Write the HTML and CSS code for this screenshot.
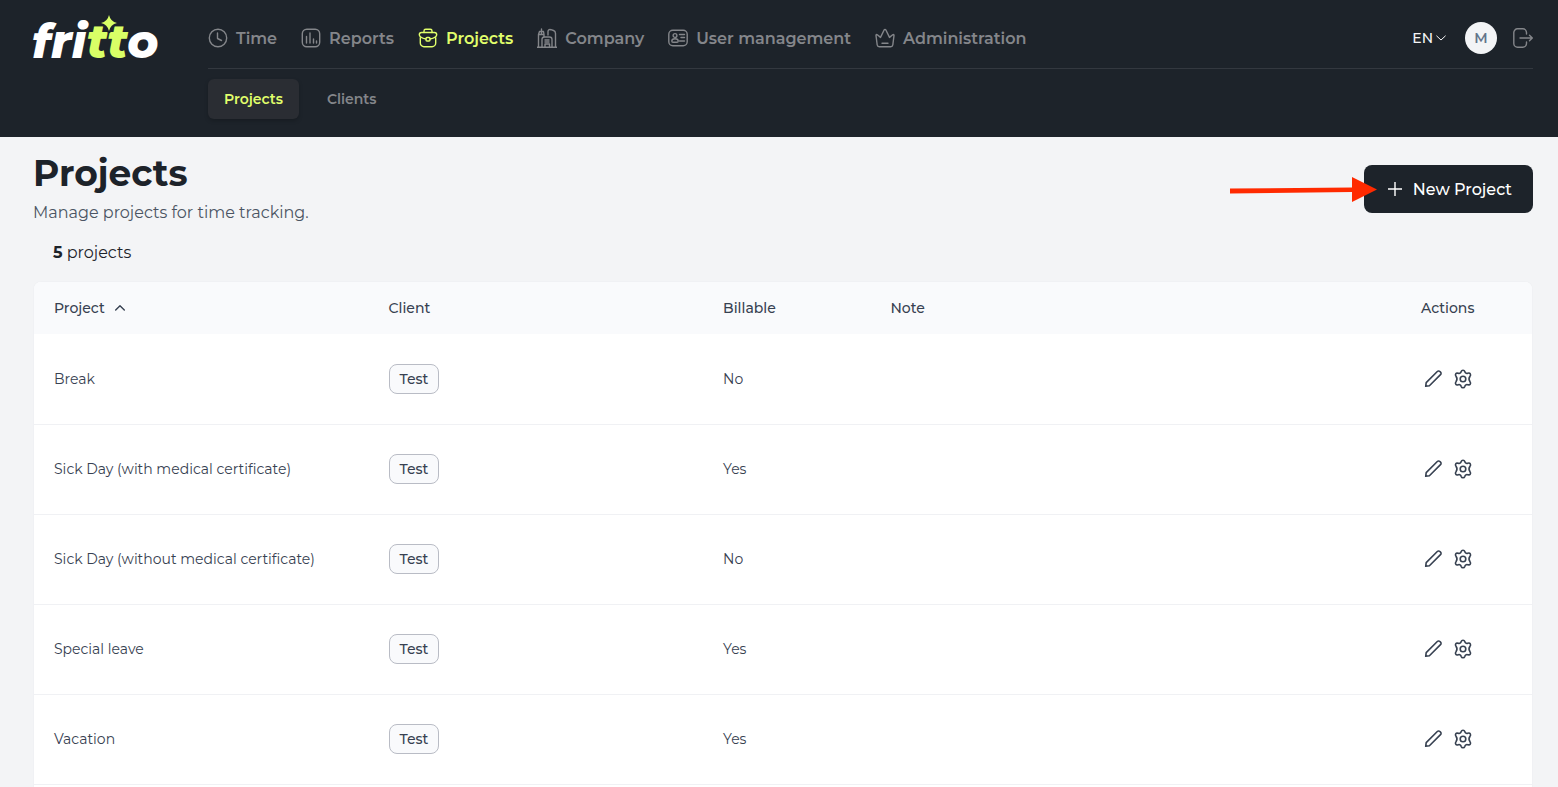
FILE: index.html
```html
<!DOCTYPE html>
<html lang="en">
<head>
<meta charset="utf-8" />
<meta name="viewport" content="width=device-width, initial-scale=1" />
<title>Projects</title>
<link rel="stylesheet" href="styles.css">
</head>
<body>
<svg class="sprite" aria-hidden="true">
  <symbol id="pencil" viewBox="0 0 20 20">
    <path d="M2.700 17.300l.5-3.700L14.300 2.500a1.800 1.800 0 0 1 2.600 0l.6.6a1.800 1.800 0 0 1 0 2.600L6.400 16.800z"/>
  </symbol>
  <symbol id="gear" viewBox="0 0 20 20">
    <circle cx="10" cy="10" r="2.800"/>
    <path d="M8.200 2.500Q8.600 1.200 10 1.200T11.800 2.500Q12.400 4.900 14.800 4.200Q16.600 3.700 17.300 4.900T17 7.300Q15 10 17 12.700Q18 14 17.300 15.100T14.800 15.800Q12.400 15.100 11.800 17.500Q11.400 18.800 10 18.800T8.200 17.500Q7.600 15.100 5.200 15.800Q3.400 16.300 2.700 15.100T3 12.700Q5 10 3 7.300Q2 6 2.700 4.900T5.200 4.200Q7.600 4.900 8.200 2.500z"/>
  </symbol>
</svg>

<header class="header">
  <a href="#" class="logo">fri<span>tt</span>o
    <svg class="star" viewBox="0 0 20 20"><path d="M10 2Q11.500 8.500 18 10Q11.500 11.500 10 18Q8.500 11.500 2 10Q8.500 8.500 10 2z"/></svg>
  </a>
  <div class="menu">
    <div class="menu-top">
      <nav class="nav">
        <a href="#"><svg viewBox="0 0 20 20"><circle cx="10" cy="10" r="8.700"/><path d="M9.500 5v5.500l4 2"/></svg>Time</a>
        <a href="#"><svg viewBox="0 0 20 20"><rect x="1.300" y="1.300" width="17.400" height="17.400" rx="4.500"/><path d="M5.500 8.500V15M9 5v10M12.500 11v4M15.500 13v2"/></svg>Reports</a>
        <a href="#" class="active"><svg viewBox="0 0 20 20"><path d="M6 4.500V3a1.700 1.700 0 0 1 1.700-1.700h4.600A1.700 1.700 0 0 1 14 3v1.500"/><path d="M8 11C3.300 10 1.300 8.900 1.300 6.700a2.200 2.200 0 0 1 2.200-2.200h13a2.200 2.200 0 0 1 2.200 2.200c0 2.200-2 3.300-6.700 4.300"/><rect x="8" y="9.500" width="4" height="3.500" rx="1"/><path d="M2.300 9.800V15a3.700 3.700 0 0 0 3.700 3.700h8a3.700 3.700 0 0 0 3.700-3.700V9.800"/></svg>Projects</a>
        <a href="#"><svg viewBox="0 0 20 20"><path d="M0 19.300h20M1.500 19V6.500h5.500V9M4.500 6.500V3.500M2.500 3.500h4M4.500 1v2.500M1.500 6.500l1-3M6.500 3.500L7 6.500M11 7V3.500q0-2.500 3-1.800l2.500.8q2 .7 2 3V19M5 19v-7.500q0-2.500 2.500-2.500h5q2.500 0 2.500 2.500V19M8 19v-3h4.500v3M8 12h4M8 14h4"/></svg>Company</a>
        <a href="#"><svg viewBox="0 0 20 20"><rect x=".8" y="2.300" width="18.400" height="15.400" rx="4"/><circle cx="7" cy="7.500" r="1.900"/><path d="M3.800 13q0-2.300 3.200-2.300t3.200 2.300q0 1.200-1.200 1.200H5q-1.200 0-1.200-1.200zM11.500 6.500h5M13 9.500h3.500M11.500 13h5"/></svg>User management</a>
        <a href="#"><svg viewBox="0 0 20 20"><path d="M2.200 17L1 7.500q0-1.500 1.300-.7l3.200 2.600L9 2.200q1-1.700 2 0l3.500 7.200 3.200-2.600q1.300-.8 1.300.7L17.800 17q-.3 1.700-2 1.700H4.200q-1.700 0-2-1.700zM7 15.300h6"/></svg>Administration</a>
      </nav>
      <div class="account">
        <button type="button" class="lang">EN<svg viewBox="0 0 10 10"><path d="M.7 3L5 7l4.300-4"/></svg></button>
        <button type="button" class="avatar">M</button>
        <button type="button" class="logout" aria-label="Log out"><svg viewBox="0 0 20 20"><path d="M13.500 6V4.500A3.700 3.700 0 0 0 9.800.8H4.500A3.700 3.700 0 0 0 .8 4.500v11a3.700 3.700 0 0 0 3.700 3.700h5.300a3.700 3.700 0 0 0 3.700-3.700V14M7 10h12.300M16.500 7.200l2.800 2.800-2.800 2.800"/></svg></button>
      </div>
    </div>
    <nav class="subnav">
      <a href="#" class="active">Projects</a>
      <a href="#">Clients</a>
    </nav>
  </div>
</header>

<main class="content">
  <div class="page-head">
    <div>
      <h1>Projects</h1>
      <p class="lead">Manage projects for time tracking.</p>
    </div>
    <div class="new-wrap">
      <button type="button" class="new"><svg viewBox="0 0 14 14"><path d="M7 0v14M0 7h14"/></svg>New Project</button>
      <svg class="arrow" viewBox="0 0 148 26"><path d="M1 11.500L123 10.500V0l25 12.500L123 25V15L1 16.500z"/></svg>
    </div>
  </div>
  <p class="count"><b>5</b> projects</p>

  <div class="card">
    <table>
      <colgroup>
        <col class="c-project"><col class="c-client"><col class="c-billable"><col><col class="c-actions">
      </colgroup>
      <thead>
        <tr>
          <th>Project<svg class="sort" viewBox="0 0 10 10"><path d="M.7 7L5 2.700 9.300 7"/></svg></th>
          <th>Client</th>
          <th>Billable</th>
          <th>Note</th>
          <th>Actions</th>
        </tr>
      </thead>
      <tbody>
        <tr>
          <td>Break</td>
          <td><span class="tag">Test</span></td>
          <td>No</td>
          <td></td>
          <td><div class="actions"><button type="button" aria-label="Edit"><svg><use href="#pencil"/></svg></button><button type="button" aria-label="Settings"><svg><use href="#gear"/></svg></button></div></td>
        </tr>
        <tr>
          <td>Sick Day (with medical certificate)</td>
          <td><span class="tag">Test</span></td>
          <td>Yes</td>
          <td></td>
          <td><div class="actions"><button type="button" aria-label="Edit"><svg><use href="#pencil"/></svg></button><button type="button" aria-label="Settings"><svg><use href="#gear"/></svg></button></div></td>
        </tr>
        <tr>
          <td>Sick Day (without medical certificate)</td>
          <td><span class="tag">Test</span></td>
          <td>No</td>
          <td></td>
          <td><div class="actions"><button type="button" aria-label="Edit"><svg><use href="#pencil"/></svg></button><button type="button" aria-label="Settings"><svg><use href="#gear"/></svg></button></div></td>
        </tr>
        <tr>
          <td>Special leave</td>
          <td><span class="tag">Test</span></td>
          <td>Yes</td>
          <td></td>
          <td><div class="actions"><button type="button" aria-label="Edit"><svg><use href="#pencil"/></svg></button><button type="button" aria-label="Settings"><svg><use href="#gear"/></svg></button></div></td>
        </tr>
        <tr>
          <td>Vacation</td>
          <td><span class="tag">Test</span></td>
          <td>Yes</td>
          <td></td>
          <td><div class="actions"><button type="button" aria-label="Edit"><svg><use href="#pencil"/></svg></button><button type="button" aria-label="Settings"><svg><use href="#gear"/></svg></button></div></td>
        </tr>
      </tbody>
    </table>
  </div>
</main>
</body>
</html>
```
FILE: styles.css
```css
* {
  box-sizing: border-box;
  margin: 0;
  padding: 0;
}
body {
  display: flex;
  flex-direction: column;
  min-height: 100vh;
  background: #f3f4f6;
  color: #1d232a;
  font-family: Montserrat, Inter, "Open Sans", sans-serif;
  font-size: 14px;
}
a {
  color: inherit;
  text-decoration: none;
}
button {
  border: 0;
  background: none;
  color: inherit;
  font: inherit;
  cursor: pointer;
}
svg {
  fill: none;
  stroke: currentColor;
  stroke-width: 1.4;
  stroke-linecap: round;
  stroke-linejoin: round;
}
.sprite {
  display: none;
}

/* header */
.header {
  display: flex;
  height: 137px;
  padding: 8px 25px 0 32px;
  background: #1d232a;
}
.logo {
  position: relative;
  flex: 0 0 176px;
  color: #fff;
  font-size: 47px;
  font-style: italic;
  font-weight: 800;
  line-height: 68px;
}
.logo span {
  color: #d9ff66;
}
/* the dark outline cuts the star out of the letters below it */
.star {
  position: absolute;
  top: 5px;
  left: 67px;
  width: 20px;
  height: 20px;
  fill: #d9ff66;
  stroke: #1d232a;
  stroke-width: 4;
  paint-order: stroke;
}
.menu {
  flex: 1;
}
.menu-top {
  display: flex;
  justify-content: space-between;
  height: 61px;
  border-bottom: 1px solid #33383f;
}
.nav,
.nav a,
.account {
  display: flex;
  align-items: center;
}
.nav {
  gap: 24px;
  color: #84868a;
  font-size: 16px;
  font-weight: 600;
}
.nav a {
  gap: 8px;
}
.nav svg {
  width: 20px;
  height: 20px;
}
.nav .active,
.subnav .active {
  color: #e1ff6b;
}
.account {
  color: #f3f4f6;
}
.lang {
  display: flex;
  align-items: center;
  gap: 3px;
  font-weight: 500;
}
.lang svg {
  width: 10px;
  height: 10px;
  stroke-width: 1;
}
.avatar {
  width: 32px;
  height: 32px;
  margin: 0 16px 0 19px;
  border-radius: 50%;
  background: #f3f4f6;
  color: #64748b;
  font-size: 14px;
  font-weight: 600;
}
.logout,
.logout svg {
  display: block;
  height: 20px;
  color: #84868a;
}
.subnav {
  display: flex;
  gap: 12px;
  padding-top: 10px;
  color: #84868a;
  font-weight: 600;
}
.subnav a {
  padding: 0 16px;
  border-radius: 6px;
  line-height: 40px;
}
.subnav .active {
  background: #2a2d33;
  box-shadow: 0 2px 4px rgba(0, 0, 0, .2);
}

/* page */
.content {
  display: flex;
  flex: 1;
  flex-direction: column;
  padding: 12px 25px 0 33px;
}
.page-head {
  display: flex;
  justify-content: space-between;
}
h1 {
  font-size: 36px;
  font-weight: 700;
  line-height: 48px;
}
.lead {
  color: #4b5563;
  font-size: 16px;
  line-height: 32px;
}
.new-wrap {
  position: relative;
  padding-top: 16px;
}
.new {
  display: flex;
  align-items: center;
  gap: 11px;
  height: 48px;
  padding: 0 21px 0 24px;
  border-radius: 8px;
  background: #1d232a;
  color: #fff;
  font-size: 16px;
  font-weight: 500;
}
.new svg {
  width: 14px;
  height: 14px;
}
/* pointer lying over the left edge of the button */
.new-wrap .arrow {
  position: absolute;
  top: 28px;
  right: 156px;
  width: 148px;
  height: 26px;
  fill: #ff2a00;
  stroke: none;
}
.count {
  padding: 12px 20px 16px;
  font-size: 16px;
  line-height: 24px;
}
.card {
  flex: 1;
  border: 1px solid #f0f1f4;
  border-bottom: 0;
  border-radius: 8px 8px 0 0;
  background: #fff;
  overflow: hidden;
}
table {
  width: 100%;
  border-collapse: collapse;
  table-layout: fixed;
}
.c-project,
.c-client {
  width: 22.333%;
}
.c-billable {
  width: 11.167%;
}
.c-actions {
  width: 131px;
}
th,
td {
  padding: 0 20px;
  color: #374151;
  text-align: left;
}
th {
  height: 52px;
  background: #f9fafc;
  font-weight: 500;
}
td {
  height: 90px;
  border-bottom: 1px solid #f0f1f4;
}
.sort {
  width: 10px;
  height: 10px;
  margin-left: 10px;
}
.tag {
  display: inline-block;
  padding: 0 10px;
  border: 1px solid #b9bcc5;
  border-radius: 8px;
  background: #f9fafc;
  font-weight: 500;
  line-height: 28px;
}
.actions {
  display: flex;
  gap: 10px;
  padding-left: 2px;
}
.actions svg {
  display: block;
  width: 20px;
  height: 20px;
  stroke-width: 1.6;
}
```
